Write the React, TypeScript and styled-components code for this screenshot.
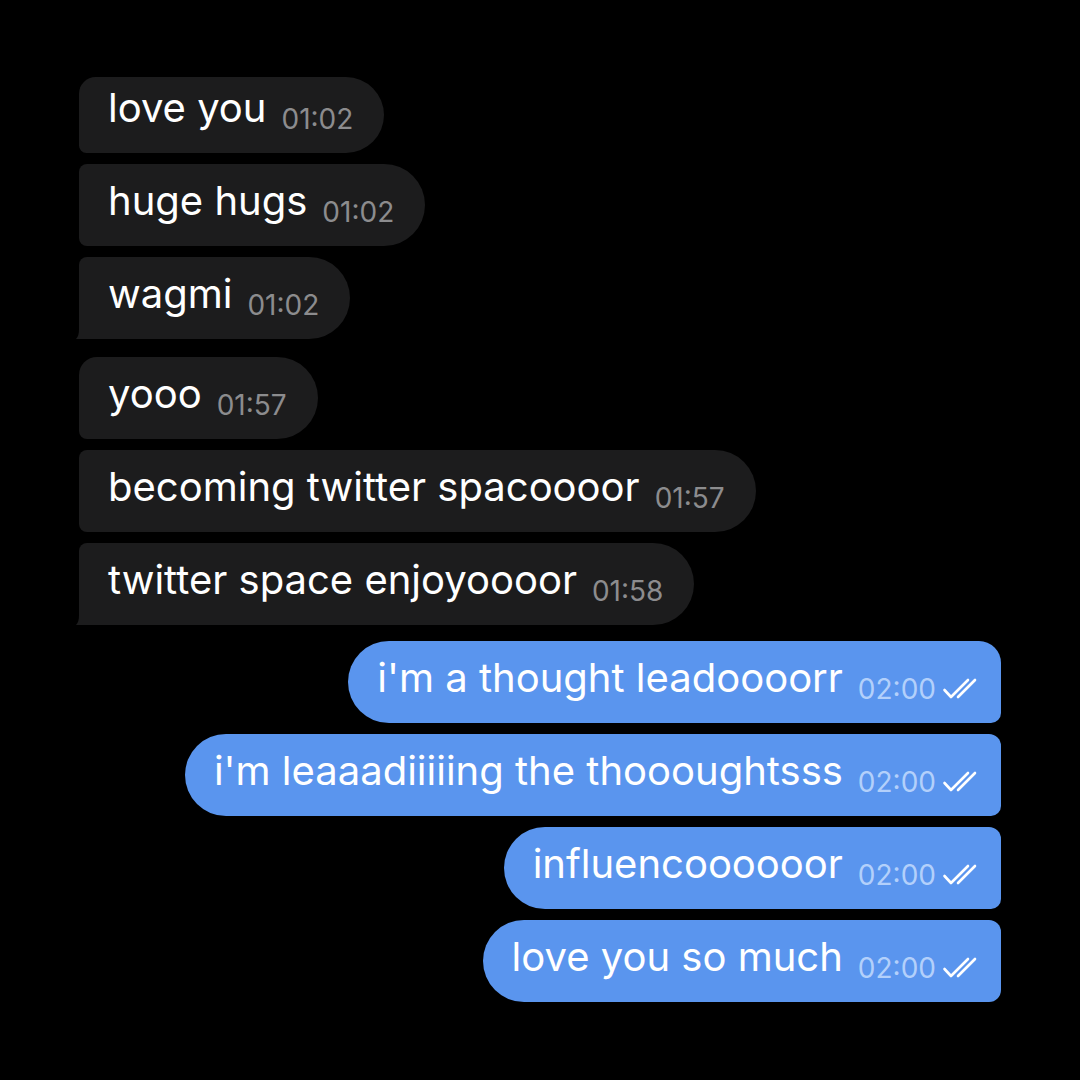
import React from "react";
import styled, { createGlobalStyle, css } from "styled-components";

const Global = createGlobalStyle`
  html, body { margin: 0; padding: 0; background: #000; }
  body { font-family: Inter, "Noto Sans", sans-serif; -webkit-font-smoothing: antialiased; }
`;

const Page = styled.div`
  width: 1080px;
  height: 1080px;
  background: #000;
  box-sizing: border-box;
  padding: 77px 79px 0 79px;
  display: flex;
  flex-direction: column;
`;

const Group = styled.div<{ $out?: boolean; $gap: number }>`
  display: flex;
  flex-direction: column;
  align-items: ${(p) => (p.$out ? "flex-end" : "flex-start")};
  gap: 11px;
  margin-bottom: ${(p) => p.$gap}px;
`;

type Pos = "first" | "mid" | "last" | "single";

const radii = (out: boolean, pos: Pos) => {
  const big = 18;
  const small = 8;
  const full = 41;
  const top = pos === "first" || pos === "single" ? big : small;
  const bottom = pos === "last" || pos === "single" ? 4 : small;
  if (out) {
    return css`
      border-radius: ${full}px ${top + 4}px ${pos === "last" ? 12 : 10}px ${full}px;
    `;
  }
  return css`
    border-radius: ${top}px ${full}px ${full}px ${bottom}px;
  `;
};

const Bubble = styled.div<{ $out?: boolean; $pos: Pos; $short?: boolean }>`
  position: relative;
  box-sizing: border-box;
  height: ${(p) => (p.$short ? 76 : 82)}px;
  padding: ${(p) => (p.$short ? 7 : 13)}px ${(p) => (p.$out ? 23 : 31)}px 0 29px;
  background: ${(p) => (p.$out ? "#5a95ee" : "#1c1c1d")};
  color: #fff;
  font-size: 40px;
  line-height: 48px;
  white-space: nowrap;
  ${(p) => radii(!!p.$out, p.$pos)}
`;

const Meta = styled.span<{ $out?: boolean }>`
  display: inline-flex;
  align-items: center;
  gap: 6px;
  margin-left: 15px;
  font-size: 28px;
  vertical-align: -7px;
  color: ${(p) => (p.$out ? "#b3d0fb" : "#8c8c8e")};
`;

const Tail = styled.svg`
  position: absolute;
  left: -3px;
  bottom: 0;
  width: 26px;
  height: 24px;
`;

const Check = () => (
  <svg width="36" height="24" viewBox="0 0 36 24" fill="none">
    <path d="M2.5 13 L9 20 L26 3" stroke="#fff" strokeWidth="2.6" strokeLinecap="round" strokeLinejoin="round" />
    <path d="M16 20 L33 3" stroke="#fff" strokeWidth="2.6" strokeLinecap="round" />
  </svg>
);

type Msg = { text: string; time: string; pos: Pos };

const incoming1: Msg[] = [
  { text: "love you", time: "01:02", pos: "first" },
  { text: "huge hugs", time: "01:02", pos: "mid" },
  { text: "wagmi", time: "01:02", pos: "last" },
];
const incoming2: Msg[] = [
  { text: "yooo", time: "01:57", pos: "first" },
  { text: "becoming twitter spacoooor", time: "01:57", pos: "mid" },
  { text: "twitter space enjoyoooor", time: "01:58", pos: "last" },
];
const outgoing: Msg[] = [
  { text: "i'm a thought leadoooorr", time: "02:00", pos: "first" },
  { text: "i'm leaaadiiiiing the thoooughtsss", time: "02:00", pos: "mid" },
  { text: "influencoooooor", time: "02:00", pos: "mid" },
  { text: "love you so much", time: "02:00", pos: "last" },
];

const InMsg = ({ m, short }: { m: Msg; short?: boolean }) => (
  <Bubble $pos={m.pos} $short={short}>
    {m.text}
    <Meta>{m.time}</Meta>
    {m.pos === "last" && (
      <Tail viewBox="0 0 26 24">
        <path d="M3 0 V14 C3 19 2 22 0 24 H26 V0 Z" fill="#1c1c1d" />
      </Tail>
    )}
  </Bubble>
);

const OutMsg = ({ m }: { m: Msg }) => (
  <Bubble $out $pos={m.pos}>
    {m.text}
    <Meta $out>
      {m.time}
      <Check />
    </Meta>
  </Bubble>
);

export default function App() {
  return (
    <>
      <Global />
      <Page>
        <Group $gap={18}>
          {incoming1.map((m, i) => (
            <InMsg key={m.text} m={m} short={i === 0} />
          ))}
        </Group>
        <Group $gap={16}>
          {incoming2.map((m) => (
            <InMsg key={m.text} m={m} />
          ))}
        </Group>
        <Group $out $gap={0}>
          {outgoing.map((m) => (
            <OutMsg key={m.text} m={m} />
          ))}
        </Group>
      </Page>
    </>
  );
}
